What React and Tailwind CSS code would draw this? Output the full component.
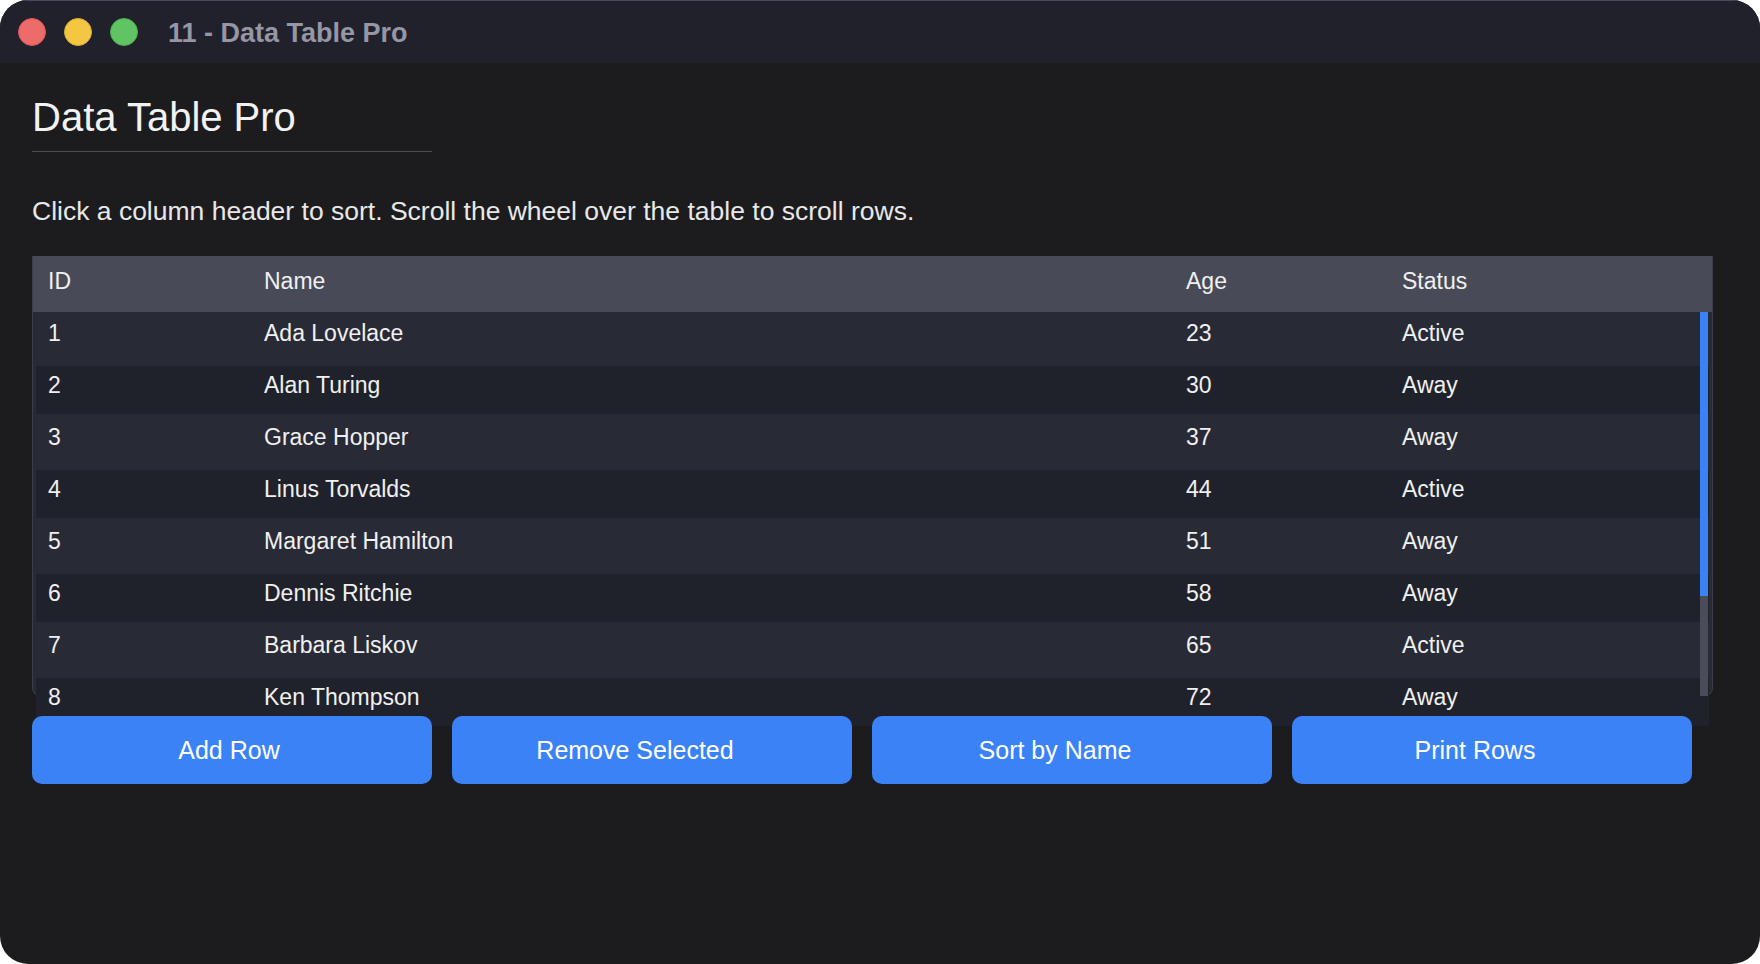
import React from 'react'

const rows = [
  { id: 1, name: 'Ada Lovelace', age: 23, status: 'Active' },
  { id: 2, name: 'Alan Turing', age: 30, status: 'Away' },
  { id: 3, name: 'Grace Hopper', age: 37, status: 'Away' },
  { id: 4, name: 'Linus Torvalds', age: 44, status: 'Active' },
  { id: 5, name: 'Margaret Hamilton', age: 51, status: 'Away' },
  { id: 6, name: 'Dennis Ritchie', age: 58, status: 'Away' },
  { id: 7, name: 'Barbara Liskov', age: 65, status: 'Active' },
  { id: 8, name: 'Ken Thompson', age: 72, status: 'Away' },
]

const buttons = [
  { label: 'Add Row', shift: 'pr-[6px]' },
  { label: 'Remove Selected', shift: 'pr-[34px]' },
  { label: 'Sort by Name', shift: 'pr-[34px]' },
  { label: 'Print Rows', shift: 'pr-[34px]' },
]

const cols = 'grid grid-cols-[216px_922px_216px_1fr]'

export default function App() {
  return (
    <div className="w-[1760px] h-[964px] bg-white font-['Liberation_Sans',Arial,sans-serif]">
      <div className="w-full h-full rounded-[28px] overflow-hidden bg-[#1c1c1e] flex flex-col">
        {/* title bar */}
        <div className="h-[63px] shrink-0 bg-[#21212c] shadow-[inset_0_1px_0_#4a4a56] flex items-center pl-[18px]">
          <div className="flex gap-[18px]">
            <span className="w-[28px] h-[28px] rounded-full bg-[#ee6b6b] border border-[#d65555]" />
            <span className="w-[28px] h-[28px] rounded-full bg-[#f5c644] border border-[#dcae34]" />
            <span className="w-[28px] h-[28px] rounded-full bg-[#61c462] border border-[#4fae50]" />
          </div>
          <span className="ml-[30px] pt-[4px] text-[27px] font-bold text-[#9696a4]">11 - Data Table Pro</span>
        </div>

        {/* content */}
        <div className="pl-[32px] pt-[30px]">
          <div className="w-[400px] border-b border-[#4a4a53] pb-[10px]">
            <h1 className="h-[48px] text-[40px] leading-[48px] text-[#f2f2f2]">Data Table Pro</h1>
          </div>

          <p className="mt-[43px] text-[26.5px] leading-[32px] text-[#e8e8e8]">
            Click a column header to sort. Scroll the wheel over the table to scroll rows.
          </p>

          {/* table */}
          <div className="relative mt-[29px] w-[1681px] h-[440px] border-x border-b border-[#3c3d48] rounded-b-[8px] bg-[#282a36]">
            <div className="h-[56px] bg-[#484a57] px-[3px]">
              <div className={`${cols} text-[23px] leading-[51px] text-[#f0f0f0]`}>
                <span className="pl-[12px]">ID</span>
                <span className="pl-[12px]">Name</span>
                <span className="pl-[12px]">Age</span>
                <span className="pl-[12px]">Status</span>
              </div>
            </div>
            {rows.map((r, i) => (
              <div key={r.id} className="h-[52px] py-[2px] px-[3px]">
                <div
                  className={`${cols} h-[48px] text-[23px] leading-[39px] text-[#f0f0f0] ${
                    i % 2 === 1 ? 'bg-[#20222b]' : ''
                  }`}
                >
                  <span className="pl-[12px]">{r.id}</span>
                  <span className="pl-[12px]">{r.name}</span>
                  <span className="pl-[12px]">{r.age}</span>
                  <span className="pl-[12px]">{r.status}</span>
                </div>
              </div>
            ))}
            {/* scrollbar */}
            <div className="absolute right-[4px] top-[56px] w-[8px] h-[384px] bg-[#4b4c59]">
              <div className="h-[284px] bg-[#3b82f6]" />
            </div>
          </div>

          {/* actions */}
          <div className="relative z-10 mt-[20px] flex gap-[20px]">
            {buttons.map((b) => (
              <button
                key={b.label}
                className={`w-[400px] h-[68px] rounded-[10px] bg-[#3b82f6] text-white text-[25px] flex items-center justify-center pt-[2px] ${b.shift}`}
              >
                {b.label}
              </button>
            ))}
          </div>
        </div>
      </div>
    </div>
  )
}
